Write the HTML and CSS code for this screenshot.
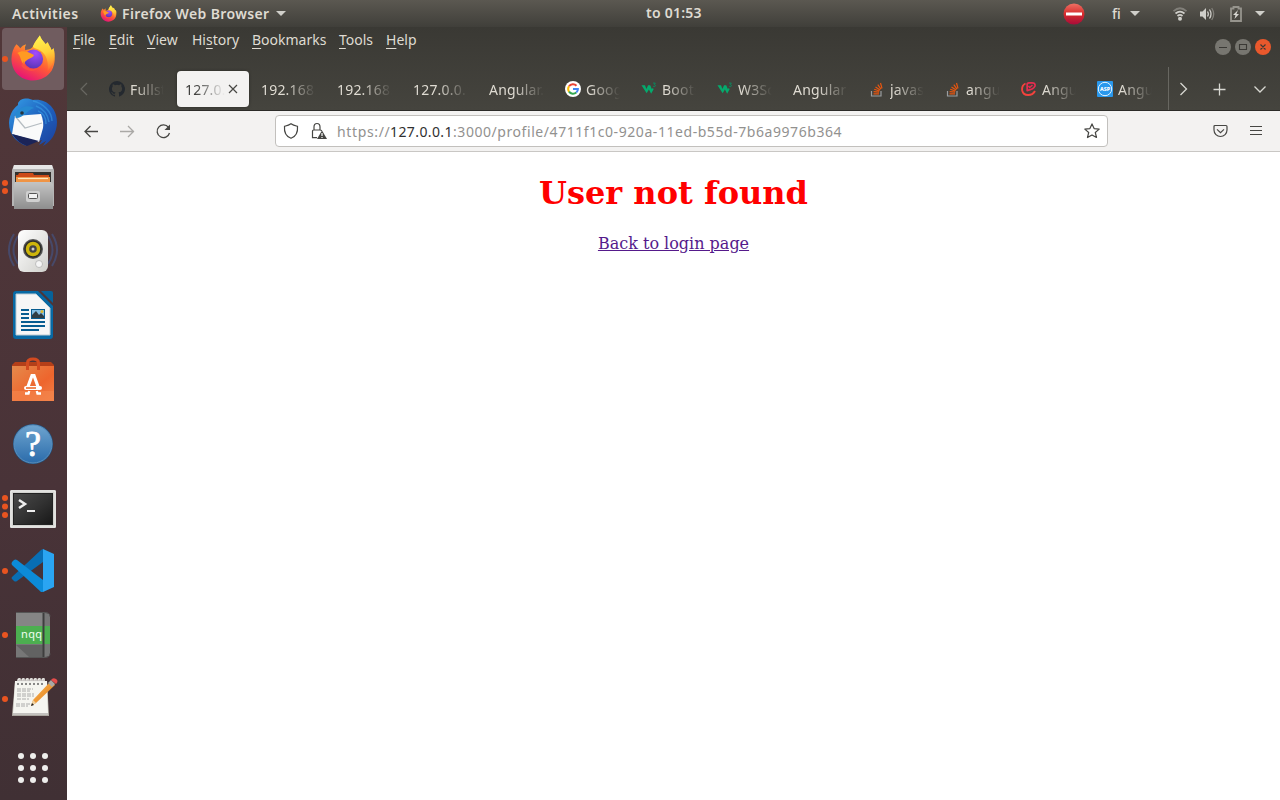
FILE: index.html
```html
<!DOCTYPE html>
<html lang="en">
<head>
<meta charset="utf-8">
<title>User not found</title>
<link rel="stylesheet" href="styles.css">
</head>
<body>
<svg class="defs" width="0" height="0" aria-hidden="true">
  <defs>
    <linearGradient id="fxBody" x1=".8" y1="0" x2=".3" y2="1"><stop offset="0" stop-color="#fff44f"/><stop offset=".3" stop-color="#ffa52a"/><stop offset=".6" stop-color="#ff5a36"/><stop offset="1" stop-color="#e5107a"/></linearGradient>
    <linearGradient id="fxFlame" x1=".4" y1="0" x2=".6" y2="1"><stop offset="0" stop-color="#fff44f"/><stop offset=".5" stop-color="#ffd23a"/><stop offset="1" stop-color="#ff9a2e" stop-opacity=".2"/></linearGradient>
    <radialGradient id="fxGlobe" cx=".6" cy=".2" r=".8"><stop offset="0" stop-color="#a34bff"/><stop offset="1" stop-color="#5b36b8"/></radialGradient>
    <linearGradient id="bird" x1="0" y1="0" x2="1" y2="1"><stop offset="0" stop-color="#35a0e8"/><stop offset=".5" stop-color="#1f62bf"/><stop offset="1" stop-color="#1b3f9c"/></linearGradient>
    <linearGradient id="steel" x1="0" y1="0" x2="0" y2="1"><stop offset="0" stop-color="#c4c4c4"/><stop offset="1" stop-color="#8e8e8e"/></linearGradient>
    <linearGradient id="white" x1="0" y1="0" x2="1" y2="1"><stop offset="0" stop-color="#fff"/><stop offset="1" stop-color="#cfcfcb"/></linearGradient>
    <linearGradient id="bag" x1="0" y1="0" x2="1" y2="1"><stop offset="0" stop-color="#e58a4c"/><stop offset=".6" stop-color="#ee652d"/><stop offset="1" stop-color="#f08048"/></linearGradient>
    <linearGradient id="help" x1="0" y1="0" x2="0" y2="1"><stop offset="0" stop-color="#6ea4cf"/><stop offset="1" stop-color="#2b6cab"/></linearGradient>
    <linearGradient id="term" x1="0" y1="0" x2="1" y2="1"><stop offset="0" stop-color="#494949"/><stop offset=".5" stop-color="#333"/><stop offset="1" stop-color="#171717"/></linearGradient>
    <linearGradient id="pencil" x1="0" y1="0" x2="1" y2="1"><stop offset="0" stop-color="#ffbd59"/><stop offset="1" stop-color="#dc7412"/></linearGradient>
    <linearGradient id="stop" x1="0" y1="0" x2="0" y2="1"><stop offset="0" stop-color="#ee7164"/><stop offset=".5" stop-color="#d72b2c"/><stop offset="1" stop-color="#a70c3a"/></linearGradient>
    <symbol id="firefox" viewBox="0 0 46 48">
      <path d="M6 10C8 11 9 13 10 14Q12 11 16 10Q14 13 15 16C20 15 21 15 23 12C25 7 28 4 30 1C31 5 34 7 36 10L38 8C39 11 41 13 42 16L44 14C46 21 46 30 42 37C38 43 31 47 23 47C10 47 1 37 1 25C1 19 3 14 6 10Z" fill="url(#fxBody)"/>
      <path d="M30 1C31 5 34 7 36 10L38 8C39 11 41 13 42 16L44 14C46 22 44 31 38 37C39 28 37 20 30 16C26 14 23 14 23 12C25 7 28 4 30 1Z" fill="url(#fxFlame)"/>
      <circle cx="23.500" cy="25" r="9.800" fill="url(#fxGlobe)"/>
      <path d="M7 19C11 16 16 17 20 19L24 21C23 24 20 24 17 26C15 27 14 29 14 31C10 28 11 22 7 19Z" fill="#ff9a23"/>
      <path d="M13.500 27C15 35 22 37 29 34C25 39 15 38 11 32Z" fill="#ff563b" opacity=".65"/>
    </symbol>
    <symbol id="stack" viewBox="0 0 16 16"><path d="M2.500 10v5h9.500v-5" fill="none" stroke="#9a9da0" stroke-width="1.200"/><path d="M4.500 12.800h5.500M4.600 10.600l5.500.6M5.200 8.300l5.200 1.700M6.500 5.900l4.600 3.200M8.800 3.600l3.200 4.600M11.500 2l1.500 5.300" fill="none" stroke="#e8560f" stroke-width="1.200"/></symbol>
    <symbol id="w3" viewBox="0 0 17 16"><path d="M.5 4h3.700l1.600 4L7.500 4h2.300l1.800 4.200L12.400 7l1.100 1-2.700 5-2.400-4.600L6 12.500Z" fill="#04aa6d"/><path d="M12.800 1.700h2.400l-1.100 1.600c1.700.1 1.500 2.100 0 2.200l-1.200-.4" fill="none" stroke="#078c60" stroke-width="1"/></symbol>
  </defs>
</svg>

<header class="topbar">
  <div class="topbar-left">
    <span class="activities">Activities</span>
    <svg class="app-icon" width="17" height="17"><use href="#firefox"/></svg>
    <span class="app-name">Firefox Web Browser</span>
    <svg width="10" height="5" viewBox="0 0 10 5"><path d="M0 0h10L5 5Z" fill="#d0cfca"/></svg>
  </div>
  <span class="clock">to 01:53</span>
  <div class="topbar-right">
    <svg class="busy" width="22" height="22" viewBox="0 0 22 22"><circle cx="11" cy="11" r="10.500" fill="url(#stop)"/><rect x="3" y="9.500" width="16" height="3" fill="#fff"/></svg>
    <span class="lang">fi</span>
    <svg class="caret" width="10" height="5" viewBox="0 0 10 5"><path d="M0 0h10L5 5Z" fill="#d0cfca"/></svg>
    <svg class="wifi" width="14" height="14" viewBox="0 0 14 14" fill="none" stroke-width="1.700"><path d="M.5 4.200Q7-1.700 13.500 4.200" stroke="#817f79"/><path d="M2.500 6.500Q7 2.700 11.500 6.500" stroke="#d0cfca"/><path d="M4.500 9Q7 6.700 9.500 9" stroke="#d0cfca"/><circle cx="7" cy="11.800" r="2" fill="#d0cfca"/></svg>
    <svg class="volume" width="16" height="14" viewBox="0 0 16 14" fill="none"><path d="M1 4.500h2.500L7 1v12L3.500 9.500H1Z" fill="#d0cfca"/><path d="M8.500 4.500q1.700 2.500 0 5M10.500 2.500q3 4.500 0 9" stroke="#d0cfca" stroke-width="1.300"/><path d="M12.700 1q4 6 0 12" stroke="#817f79" stroke-width="1.300"/></svg>
    <svg class="battery" width="12" height="16" viewBox="0 0 12 16"><path d="M1 2.500h2.500V1h5v1.500H11V15H1Z" fill="none" stroke="#96948d" stroke-width="1.800"/><path d="M8 4L3 9h2.500L4.500 13 9 8H6.500Z" fill="#d8d7d2"/></svg>
    <svg class="caret" width="10" height="5" viewBox="0 0 10 5"><path d="M0 0h10L5 5Z" fill="#d0cfca"/></svg>
  </div>
</header>

<div class="desktop">
  <nav class="dock">
    <svg class="dock-item" viewBox="0 0 67 64"><rect x="2" y="1" width="62" height="62" rx="4" fill="#705c5f"/><circle cx="5" cy="32" r="3" fill="#e95420"/><use href="#firefox" x="10" y="7.500" width="46" height="47"/></svg>
    <svg class="dock-item" viewBox="0 0 67 64"><path d="M18 12C21 6 29 7 33 9C46 7 57 17 57 31C57 42 51 51 43 55L46 50L39 54L42 49L32 51C27 52 24 54 27 55C17 52 9 44 9 32C9 26 12 18 18 14Z" fill="url(#bird)"/><path d="M33 10C43 12 52 21 52 30M36 15C44 18 48 25 49 31M38 20C44 22 46 28 46 33" fill="none" stroke="#3da5e9" stroke-width="1.500" opacity=".5"/><path d="M15 25L41 23Q44 31 43 37L39 51L12 43Z" fill="#fafafa"/><path d="M12 43L39 50L27 55Q18 52 12 43Z" fill="#1b2458"/><path d="M15 25L25 37L42 32" fill="none" stroke="#b6bdc2" stroke-width="1.300"/><path d="M15 23C20 14 30 14 34 17C27 19 24 27 16 27Z" fill="#2789d1"/><circle cx="22" cy="22" r="1.800" fill="#26343d"/></svg>
    <svg class="dock-item" viewBox="0 0 67 64"><circle cx="5" cy="28" r="3" fill="#e95420"/><circle cx="5" cy="36" r="3" fill="#e95420"/><path d="M14 10h38l2 5v36H12V15Z" fill="#b5b5b5"/><path d="M14 10h38l1 4H13Z" fill="#e6e6e6"/><rect x="15" y="17" width="36" height="13" fill="#33302d"/><path d="M16 20h2l1-2h14l1 2h15v8H16Z" fill="#cc4a17"/><path d="M16 22h34v6H16Z" fill="#f09445"/><path d="M18 23.500h30" stroke="#ffe6bc" stroke-width="1.200"/><path d="M15 27h36l2 2v25H14V29Z" fill="url(#steel)"/><rect x="26" y="36" width="14" height="11" rx="2" fill="#d0d0d0"/><rect x="28.500" y="38.500" width="9" height="5" rx="1" fill="#f1f1f1" stroke="#555"/></svg>
    <svg class="dock-item" viewBox="0 0 67 64"><g fill="none" stroke="#445584" stroke-width="2" opacity=".65"><path d="M14 15Q4 31 14 47M18 17Q9 31 18 45M52 15Q62 31 52 47M48 17Q57 31 48 45"/></g><rect x="18" y="11" width="30" height="42" rx="6" fill="url(#white)"/><circle cx="33" cy="30" r="10" fill="#555"/><circle cx="33" cy="30" r="8" fill="#cdb50b" stroke="#2d2d2b" stroke-width="1.500"/><circle cx="33" cy="30" r="3.800" fill="#444"/><circle cx="33" cy="30" r="1.500" fill="#ccc"/><circle cx="39" cy="45" r="3.500" fill="#f5f5f5" stroke="#aaa" stroke-width=".7"/></svg>
    <svg class="dock-item" viewBox="0 0 67 64"><path d="M16 8h22l15 15v30q0 3-3 3H16q-3 0-3-3V11q0-3 3-3Z" fill="#0769a4"/><path d="M41 8h10q2 0 2 2v10Z" fill="#07629a"/><path d="M16 11h20l14 14v27H16Z" fill="#f6f6f6" stroke="#bdcbd3"/><path d="M21 27h8M21 31h8M21 35h8M21 39h24M21 43h24M21 47h18" stroke="#075c90" stroke-width="2"/><rect x="31.500" y="26.500" width="13" height="9" fill="#83bee3" stroke="#075c90"/><path d="M32 35v-3l4-4 3 4 2-2 3 3v2Z" fill="#303d43"/><circle cx="42" cy="28.500" r="1.500" fill="#dfb930"/></svg>
    <svg class="dock-item" viewBox="0 0 67 64"><path d="M12 18l3-3h36l3 3v6H12Z" fill="#b43f19"/><path d="M12 19h42v35H12Z" fill="url(#bag)"/><path d="M12 44h42v10H12Z" fill="#f4854b" opacity=".7"/><path d="M27.500 23v-7q0-4 5.500-4t5.500 4v7" fill="none" stroke="#d24a20" stroke-width="3"/><path d="M27.500 41L32 28.500h2L38.500 41" fill="none" stroke="#fff" stroke-width="3.200"/><path d="M25 46.500h3.500l.7-2.500M36.800 44l.7 2.500H41" fill="none" stroke="#fff" stroke-width="2.300"/><rect x="24" y="39" width="18" height="4" rx="2" fill="#fff"/><path d="M26 41h10" stroke="#ed6c2d" stroke-width="1.600"/></svg>
    <svg class="dock-item" viewBox="0 0 67 64"><circle cx="33" cy="33" r="20" fill="#215687"/><circle cx="33" cy="33" r="19" fill="url(#help)" stroke="#5c8fbb"/><text x="33" y="45" text-anchor="middle" class="question">?</text></svg>
    <svg class="dock-item" viewBox="0 0 67 64"><circle cx="5" cy="23" r="3" fill="#e95420"/><circle cx="5" cy="31.500" r="3" fill="#e95420"/><circle cx="5" cy="40" r="3" fill="#e95420"/><rect x="10" y="15" width="46" height="38" rx="1.500" fill="#d3d3d0"/><rect x="11" y="16" width="44" height="36" fill="none" stroke="#f0f0ee"/><rect x="13.500" y="18.500" width="39" height="31" fill="url(#term)" stroke="#222"/><path d="M19 25l6 4-6 4" fill="none" stroke="#eee" stroke-width="2.500"/><path d="M27 36h8" stroke="#eee" stroke-width="2"/></svg>
    <svg class="dock-item" viewBox="0 0 67 64"><circle cx="5" cy="32" r="3" fill="#e95420"/><path d="M43 10v13L17 42q-1.500 1-3 0l-2-2q-1-1 0-2L41 11Z" fill="#086eb4"/><path d="M12 23l2-2q1.500-1 3 0l26 20v12h-2L12 26q-1-1 0-3Z" fill="#0c8bd8"/><path d="M43 10l11 5v33l-11 5Z" fill="#2aa5f2"/></svg>
    <svg class="dock-item" viewBox="0 0 67 64"><circle cx="5" cy="32" r="3" fill="#e95420"/><path d="M16 10h29q5 0 5 4v36q0 4-5 4H16Z" fill="#777"/><path d="M16 10h27v13H16Z" fill="#858585"/><path d="M16 42h27v12H29Z" fill="#626262"/><path d="M16 23h34v18H16Z" fill="#4caf50"/><path d="M43.500 9v45" stroke="#3e3e3e" stroke-width="2"/><path d="M16 9.500h29q5 0 5 4M16 54.500h29q5 0 5-4" fill="none" stroke="#555"/><text x="21" y="35" textLength="21" class="nqq">nqq</text></svg>
    <svg class="dock-item" viewBox="0 0 67 64"><circle cx="5" cy="32" r="3" fill="#e95420"/><path d="M15 15h32l2 32v2H12v-2Z" fill="#aaa69f"/><path d="M15 14h32l1 32H13Z" fill="#f5f5f0"/><path d="M13 47h35" stroke="#ddd" stroke-width="1"/><g fill="none" stroke="#eeeeea" stroke-width="1.600"><path d="M18 17v-3q0-3 2-2v3M22 17v-3q0-3 2-2v3M26 17v-3q0-3 2-2v3M30 17v-3q0-3 2-2v3M34 17v-3q0-3 2-2v3M38 17v-3q0-3 2-2v3M42 17v-3q0-3 2-2v3"/></g><g stroke="#999" stroke-width=".8" stroke-dasharray="4 1"><path d="M17 22h16M17 24h13M17 27h17M17 29h17M17 32h12M16 37h14M16 39h12"/></g><path d="M17 17h2M21 17h2M25 17h2M29 17h2M33 17h2M37 17h2M41 17h2" stroke="#666" stroke-width="1.500"/><path d="M31 39l2-6 18-19 4 4-19 18Z" fill="url(#pencil)"/><path d="M31 39l2-6 3 3Z" fill="#efd2a2"/><path d="M31 39l1-3 2 2Z" fill="#222"/><path d="M48 16l3-3 4 4-3 3Z" fill="#a9a9a6"/><path d="M51 13q2-3 5-1t0 5Z" fill="#e44d4b"/></svg>
    <svg class="dock-item apps" viewBox="0 0 67 64" fill="#eeeeec"><circle cx="21" cy="20" r="3"/><circle cx="33" cy="20" r="3"/><circle cx="45" cy="20" r="3"/><circle cx="21" cy="32" r="3"/><circle cx="33" cy="32" r="3"/><circle cx="45" cy="32" r="3"/><circle cx="21" cy="44" r="3"/><circle cx="33" cy="44" r="3"/><circle cx="45" cy="44" r="3"/></svg>
  </nav>

  <main class="window">
    <div class="chrome">
      <div class="menubar">
        <div class="menus">
          <span class="m-file"><u>F</u>ile</span><span class="m-edit"><u>E</u>dit</span><span class="m-view"><u>V</u>iew</span><span class="m-history">Hi<u>s</u>tory</span><span class="m-bookmarks"><u>B</u>ookmarks</span><span class="m-tools"><u>T</u>ools</span><span class="m-help"><u>H</u>elp</span>
        </div>
        <svg class="controls" width="58" height="18" viewBox="0 0 58 18"><g fill="#777670"><circle cx="9" cy="9" r="8"/><circle cx="29" cy="9" r="8"/></g><circle cx="49" cy="9" r="8" fill="#e9582c"/><path d="M5 9.500h8M25.500 6.500h7v5h-7ZM46.500 6.500l5 5M51.500 6.500l-5 5" fill="none" stroke="#3a3935" stroke-width="1.100"/></svg>
      </div>
      <div class="tabstrip">
        <svg class="scroll-left" width="34" height="36" viewBox="0 0 34 36"><path d="M20 12l-6 6 6 6" fill="none" stroke="#696862" stroke-width="1.200"/></svg>
        <div class="tab"><svg width="16" height="16" viewBox="0 0 16 16"><path fill="#24292f" d="M8 0a8 8 0 0 0-2.530 15.590c.4.070.55-.17.55-.38v-1.490c-2.230.48-2.700-.95-2.700-.95-.36-.92-.89-1.170-.89-1.170-.73-.5.060-.49.060-.49.800.06 1.230.83 1.230.83.710 1.230 1.870.87 2.330.66.070-.51.280-.87.500-1.070-1.780-.2-3.640-.89-3.640-3.950 0-.87.310-1.590.82-2.150-.08-.2-.36-1.020.08-2.120 0 0 .67-.21 2.200.82a7.700 7.700 0 0 1 4 0c1.530-1.040 2.200-.82 2.200-.82.440 1.100.160 1.920.08 2.120.51.560.82 1.270.82 2.150 0 3.070-1.870 3.750-3.650 3.950.29.250.54.730.54 1.480v2.190c0 .21.150.46.550.38A8 8 0 0 0 8 0Z"/></svg><span class="tab-title">Fullst</span></div>
        <div class="tab active"><span class="tab-title">127.0.0</span><svg width="10" height="10" viewBox="0 0 10 10"><path d="M1 1l8 8M9 1l-8 8" stroke="#484844" stroke-width="1.200"/></svg></div>
        <div class="tab"><span class="tab-title">192.168.</span></div>
        <div class="tab"><span class="tab-title">192.168.</span></div>
        <div class="tab"><span class="tab-title">127.0.0.1</span></div>
        <div class="tab"><span class="tab-title">Angular.</span></div>
        <div class="tab"><svg width="16" height="16" viewBox="0 0 16 16"><circle cx="8" cy="8" r="8" fill="#fff"/><g fill="none" stroke-width="2"><path d="M11.500 4.700A4.800 4.800 0 0 0 4 5.300" stroke="#ea4335"/><path d="M4 5.300a5 5 0 0 0 0 5.400" stroke="#fbbc05"/><path d="M4 10.700a5 5 0 0 0 7.300.8" stroke="#34a853"/><path d="M11.300 11.500A4.500 4.500 0 0 0 12.900 8H8" stroke="#4285f4"/></g></svg><span class="tab-title">Goog</span></div>
        <div class="tab"><svg width="16" height="16"><use href="#w3"/></svg><span class="tab-title">Boots</span></div>
        <div class="tab"><svg width="16" height="16"><use href="#w3"/></svg><span class="tab-title">W3Sc</span></div>
        <div class="tab"><span class="tab-title">Angular</span></div>
        <div class="tab"><svg width="16" height="16"><use href="#stack"/></svg><span class="tab-title">javas</span></div>
        <div class="tab"><svg width="16" height="16"><use href="#stack"/></svg><span class="tab-title">angu</span></div>
        <div class="tab"><svg width="16" height="16" viewBox="0 0 16 16"><path d="M4.500 2.500C1.500 4 .8 7 1.200 9.500C2.500 15.500 11 15.500 14 10" fill="none" stroke="#f4423d" stroke-width="1.900"/><path d="M6.200 9.500V3.500Q6 2 8 1.800h2.500Q14.500 1.500 14 5Q12.500 8.500 6.200 9.500Z" fill="none" stroke="#e72c50" stroke-width="1.800" stroke-linejoin="round"/><path d="M7.500 5l1.200 1.500L11.500 4" stroke="#e72c50" stroke-width="1.500" fill="none"/></svg><span class="tab-title">Angu</span></div>
        <div class="tab"><svg width="16" height="16" viewBox="0 0 16 16"><rect width="16" height="16" rx="1" fill="#2998ed"/><circle cx="8" cy="8" r="6.700" fill="none" stroke="#e4f4ff" stroke-width="1"/><text x="3" y="10" textLength="10" lengthAdjust="spacingAndGlyphs" class="asp">ASP</text></svg><span class="tab-title">Angu</span></div>
        <div class="tab-tools">
          <svg width="111" height="43" viewBox="0 0 111 43"><path d="M11.500 16l6 6-6 6M44.500 22.500h12M50.500 16.500v12M85.500 19.500l5.500 5.500 5.500-5.500" fill="none" stroke="#d8d8d2" stroke-width="1.300"/></svg>
        </div>
      </div>
    </div>
    <div class="toolbar">
      <svg class="nav-icons" width="112" height="40" viewBox="0 0 112 40" fill="none" stroke="#464643" stroke-width="1.300"><path d="M31 20.500H18M23.500 15L18 20.500L23.500 26"/><path d="M53 20.500h14M61 15l5.500 5.500L61 26" stroke="#aaa9a6"/><path d="M101.500 16.500A6.300 6.300 0 1 0 102.500 22"/><path d="M103 13.500v5.500h-5.500Z" fill="#464643" stroke="none"/></svg>
      <div class="urlbar">
        <svg width="58" height="30" viewBox="0 0 58 30" fill="none" stroke="#464643" stroke-width="1.200"><path d="M15 7.800C12.800 9.500 10.500 9.900 8.500 10.300C8 16 10 20.500 15 22.300C20 20.500 22 16 21.500 10.300C19.500 9.900 17.200 9.500 15 7.800Z"/><path d="M41 21.700h-4.500V15q0-1 1-1h7q1 0 1 1M38 14v-3q0-3.500 3-3.500t3 3.500v3"/><path d="M46 14.500l5 8.500H41Z" fill="#464643" stroke="none"/><path d="M46 17v3M46 21v1" stroke="#fff"/></svg>
        <span class="url"><span class="scheme">https://</span><span class="host">127.0.0.1</span><span class="path">:3000/profile/4711f1c0-920a-11ed-b55d-7b6a9976b364</span></span>
        <svg class="star" width="16" height="16" viewBox="0 0 16 16"><path d="M8 .9l2.100 4.700 5.100.5-3.900 3.400 1.200 5L8 11.900l-4.500 2.600 1.200-5L.8 6.100l5.100-.5Z" fill="none" stroke="#464643" stroke-width="1.200" stroke-linejoin="round"/></svg>
      </div>
      <svg class="end-icons" width="51" height="16" viewBox="0 0 51 16" fill="none" stroke="#464643" stroke-width="1.200"><path d="M2 2.500h11q1 0 1 1v3.500a6.500 6.500 0 0 1-13 0V3.500q0-1 1-1ZM4 6.400l3.500 3.300L11 6.400M37 3.500h12M37 7.500h12M37 11.500h12"/></svg>
    </div>
    <div class="page">
      <h1>User not found</h1>
      <a href="#">Back to login page</a>
    </div>
  </main>
</div>
</body>
</html>
```

FILE: styles.css
```css
* { box-sizing: border-box; }
body {
  margin: 0;
  width: 1280px;
  height: 800px;
  overflow: hidden;
  display: flex;
  flex-direction: column;
  font-family: "Noto Sans", sans-serif;
  font-size: 14px;
}
svg { flex: none; display: block; }
.defs { position: absolute; }

.topbar {
  height: 27px;
  display: grid;
  grid-template-columns: 634px 1fr auto;
  align-items: center;
  padding: 0 15px 0 12px;
  background: linear-gradient(#5b5851, #403f3a);
  color: #dfdbd2;
  font-size: 14px;
  font-weight: 600;
}
.topbar-left, .topbar-right { display: flex; align-items: center; white-space: nowrap; }
.activities { width: 88px; letter-spacing: .4px; }
.app-icon { margin-right: 5px; }
.app-name { width: 154px; letter-spacing: .38px; }
.clock { letter-spacing: .25px; line-height: 18px; padding-bottom: 1px; }
.busy { margin-right: 27px; }
.lang { width: 18px; font-weight: 500; }
.wifi { margin-left: 33px; }
.volume { margin-left: 12px; }
.battery { margin: 0 13px 0 15px; }

.desktop { flex: 1; display: flex; min-height: 0; }
.dock {
  width: 67px;
  display: flex;
  flex-direction: column;
  background: linear-gradient(#513739, #493338 60%, #403034);
}
.dock-item { width: 67px; height: 64px; }
.apps { margin-top: 5px; }
.question { font: 36px "Liberation Serif", serif; fill: #fff; stroke: #fff; stroke-width: .8px; }
.nqq { font-size: 11px; fill: #f1fff1; }
.window { flex: 1; min-width: 0; display: flex; flex-direction: column; background: #fff; }

.chrome {
  height: 84px;
  background: linear-gradient(#3a3934, #45443e);
  border-bottom: 1px solid #2c2b28;
  color: #dfdbd2;
}
.menubar { height: 40px; display: flex; justify-content: space-between; padding: 3px 8px 0 6px; }
.menus { display: flex; height: 20px; line-height: 20px; }
.menus u { text-decoration-thickness: 1px; text-underline-offset: 3px; }
.m-file { width: 36px; }
.m-edit { width: 38px; }
.m-view { width: 45px; }
.m-history { width: 60px; }
.m-bookmarks { width: 87px; }
.m-tools { width: 47px; }
.controls { margin-top: 8px; }

.tabstrip { height: 43px; display: flex; align-items: center; }
.tab { width: 76px; height: 36px; flex: none; display: flex; align-items: center; gap: 5px; padding: 0 13px 0 8px; }
.tab-title {
  flex: 1;
  min-width: 0;
  overflow: hidden;
  white-space: nowrap;
  padding-top: 2px;
  letter-spacing: .2px;
  -webkit-mask-image: linear-gradient(to left, transparent, #000 30px);
  mask-image: linear-gradient(to left, transparent, #000 30px);
}
.tab.active {
  width: 72px;
  margin-right: 4px;
  background: #f3f2f1;
  color: #3c3c3a;
  border-radius: 4px;
  padding-right: 11px;
  gap: 3px;
  box-shadow: 0 0 3px #292824;
}
.tab-tools { width: 112px; height: 43px; margin-left: auto; border-left: 1px solid #686761; }
.asp { font-size: 5px; font-weight: 800; fill: #fff; }

.toolbar {
  height: 41px;
  display: flex;
  align-items: center;
  background: #f3f2f1;
  border-bottom: 1px solid #c9c7c4;
}
.nav-icons { margin-right: 96px; }
.urlbar {
  width: 833px;
  height: 32px;
  display: flex;
  align-items: center;
  padding-right: 7px;
  border: 1px solid #c2c0bd;
  border-radius: 4px;
  background: #fff;
}
.url { flex: 1; display: flex; padding-left: 3px; white-space: nowrap; color: #92918f; }
.scheme { width: 53px; letter-spacing: .65px; }
.host { width: 63px; color: #303030; letter-spacing: .4px; }
.path { letter-spacing: .56px; }
.end-icons { margin-left: 105px; }

.page {
  flex: 1;
  text-align: center;
  font: 16px/19px "DejaVu Serif", serif;
}
.page h1 { margin: 22px 0 21px; color: #f00; font-size: 32px; line-height: 39px; }
.page a { color: #551a8b; }
```
